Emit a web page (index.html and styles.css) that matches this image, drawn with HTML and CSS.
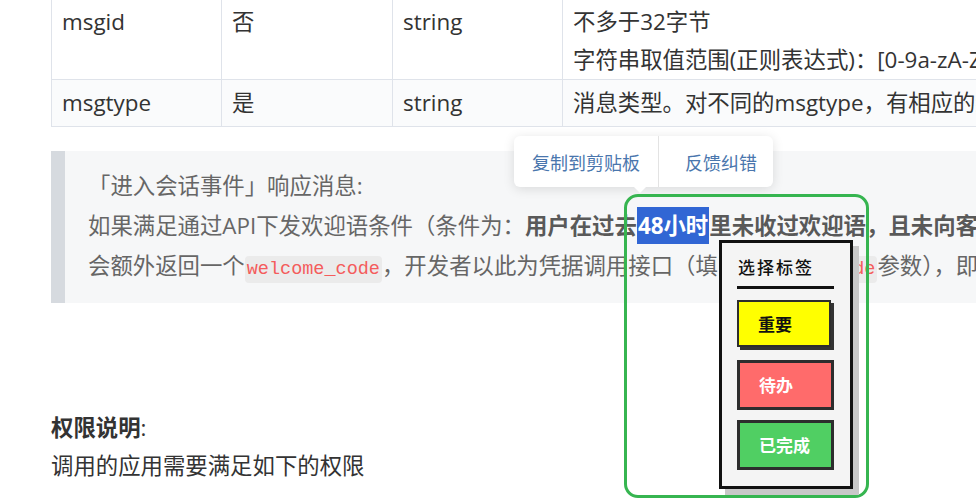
FILE: index.html
```html
<!DOCTYPE html>
<html lang="zh-CN">
<head>
    <meta charset="UTF-8">
    <meta name="viewport" content="width=device-width, initial-scale=1.0">
    <title>进入会话事件 - 接口文档</title>
    <link rel="stylesheet" href="styles.css">
</head>
<body>
    <div class="doc">
        <table class="params">
            <colgroup>
                <col class="col-name">
                <col class="col-req">
                <col class="col-type">
                <col class="col-desc">
            </colgroup>
            <tr class="row-first">
                <td>msgid</td>
                <td>否</td>
                <td>string</td>
                <td>不多于32字节<br>字符串取值范围(正则表达式)：[0-9a-zA-Z_-]*</td>
            </tr>
            <tr class="row-alt">
                <td>msgtype</td>
                <td>是</td>
                <td>string</td>
                <td>消息类型。对不同的msgtype，有相应的结构描述，下面进一步说明</td>
            </tr>
        </table>

        <blockquote class="note">
            <p>「进入会话事件」响应消息:</p>
            <p>如果满足通过API下发欢迎语条件（条件为：<strong>用户在过去<span class="selected">48小时</span>里未收过欢迎语，且未向客服发过消息</strong>），</p>
            <p>会额外返回一个<code>welcome_code</code>，开发者以此为凭据调用接口（填写<code>welcome_code</code>参数），即可向客户发送欢迎语</p>
        </blockquote>

        <div class="perm">
            <p><strong>权限说明</strong>:</p>
            <p>调用的应用需要满足如下的权限</p>
        </div>
    </div>

    <div class="copy-tip">
        <span class="tip-item tip-copy">复制到剪贴板</span>
        <span class="tip-item tip-feedback">反馈纠错</span>
    </div>

    <div class="select-frame"></div>

    <div class="tag-menu">
        <div class="tag-title">选择标签</div>
        <div class="tag-rule"></div>
        <div class="tag-btn tag-important">重要</div>
        <div class="tag-btn tag-todo">待办</div>
        <div class="tag-btn tag-done">已完成</div>
    </div>
</body>
</html>
```

FILE: styles.css
```css
html, body {
    overflow: hidden;
}
body {
    margin: 0;
    background-color: #fff;
    color: #333;
    font-family: "Open Sans", "Noto Sans CJK SC", sans-serif;
    font-size: 22.4px;
}
p {
    margin: 0;
}
.doc {
    padding-left: 51px;
    margin-top: -3px;
    white-space: nowrap;
}

/* parameter table */
.params {
    border-collapse: collapse;
    table-layout: fixed;
    width: 1240px;
}
.col-name { width: 170px; }
.col-req { width: 171px; }
.col-type { width: 170px; }
.col-desc { width: 729px; }
.params td {
    border: 1px solid #dfe3ea;
    padding: 4px 10px;
    line-height: 38px;
    vertical-align: top;
}
.row-first td {
    padding-top: 5px;
    padding-bottom: 0;
}
.row-alt td {
    background-color: #fafbfc;
}

/* quote block */
.note {
    margin: 24px 0 0;
    padding: 15px 0 13px 23px;
    border-left: 14px solid #d6dadf;
    background-color: #f6f7f8;
    color: #666;
    line-height: 40px;
}
.note strong {
    color: #595959;
}
.note code {
    font-family: "Liberation Mono", monospace;
    font-size: 18.5px;
    color: #f45c5c;
    background-color: #ebebeb;
    border-radius: 4px;
    padding: 3px 2px;
}
.selected {
    background-color: #3166d4;
    color: #fff;
    padding: 3px 1px;
}

.perm {
    margin-top: 106px;
    line-height: 38px;
}

/* floating copy / feedback tooltip */
.copy-tip {
    position: absolute;
    left: 514px;
    top: 136px;
    width: 259px;
    height: 51px;
    display: flex;
    align-items: stretch;
    background-color: #fff;
    border-radius: 6px;
    box-shadow: 0 2px 12px rgba(0,0,0,0.12);
    font-family: "Noto Sans CJK SC", sans-serif;
    font-size: 18px;
    color: #4a76ad;
}
.copy-tip::after {
    content: "";
    position: absolute;
    left: 119px;
    bottom: -6px;
    border-left: 7px solid transparent;
    border-right: 7px solid transparent;
    border-top: 7px solid #fff;
}
.tip-item {
    display: flex;
    align-items: center;
}
.tip-copy {
    width: 144px;
    justify-content: center;
    border-right: 1px solid #e3e3e3;
}
.tip-feedback {
    padding-left: 26px;
}

/* green selection outline */
.select-frame {
    position: absolute;
    left: 624px;
    top: 194px;
    width: 245px;
    height: 304px;
    box-sizing: border-box;
    border: 3px solid #36b550;
    border-radius: 14px;
}

/* tag picker */
.tag-menu {
    position: absolute;
    left: 719px;
    top: 240px;
    width: 134px;
    height: 249px;
    box-sizing: border-box;
    padding: 12px 15px 0;
    border: 3px solid #111;
    background-color: #f4f4f4;
    box-shadow: 6px 6px 0 #c8c8c8;
    font-family: "Noto Sans CJK SC", serif;
}
.tag-title {
    padding-left: 1px;
    font-size: 17px;
    font-weight: 500;
    letter-spacing: 2px;
    line-height: 24px;
    color: #111;
}
.tag-rule {
    width: 97px;
    height: 3px;
    margin: 7px 0 11px;
    background-color: #111;
}
.tag-btn {
    box-sizing: border-box;
    width: 97px;
    height: 50px;
    margin-bottom: 10px;
    padding-left: 19px;
    border: 3px solid #2d2d2d;
    font-size: 17px;
    font-weight: 700;
    line-height: 44px;
    color: #fff;
}
.tag-important {
    width: 94px;
    height: 47px;
    margin-bottom: 13px;
    border-width: 2px;
    background-color: #ffff00;
    box-shadow: 3px 3px 0 #333;
    color: #111;
    line-height: 43px;
}
.tag-todo {
    background-color: #ff6b6b;
}
.tag-done {
    background-color: #50cf63;
}
```
